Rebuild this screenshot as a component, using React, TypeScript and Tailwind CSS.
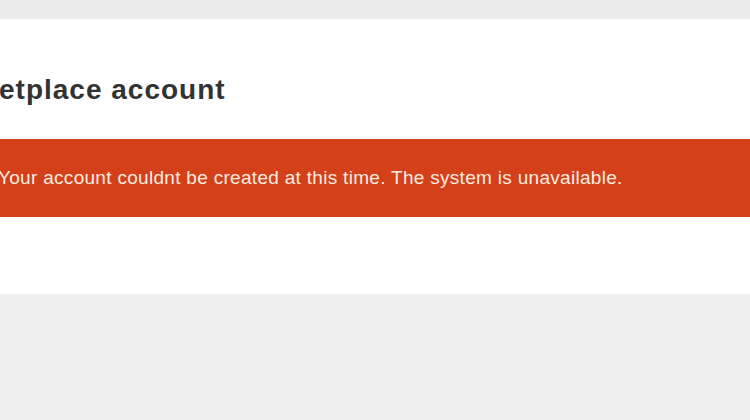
export default function App() {
  return (
    <div className="w-[750px] h-[420px] overflow-hidden bg-[#ebebeb] font-['Liberation_Sans',Arial,sans-serif] flex flex-col">
      <div className="h-[19px] shrink-0 bg-[#ebebeb]" />
      <div className="bg-white shrink-0 h-[275px] flex flex-col">
        <h1 className="h-[120px] pt-[54px] -ml-[1px] text-[28px] leading-[34px] tracking-[1px] font-bold text-[#333333] whitespace-nowrap">
          etplace account
        </h1>
        <div className="h-[78px] bg-[#d3401a] pt-[27px] -ml-[2px] text-[19px] leading-[24px] tracking-[0.3px] text-[#fcece0] whitespace-nowrap">
          Your account couldnt be created at this time. The system is unavailable.
        </div>
      </div>
      <div className="h-[105px] shrink-0 bg-[#f0f0f0] shadow-[0_1px_2px_rgba(0,0,0,0.15)]" />
      <div className="flex-1 bg-[#eeeeee]" />
    </div>
  )
}
